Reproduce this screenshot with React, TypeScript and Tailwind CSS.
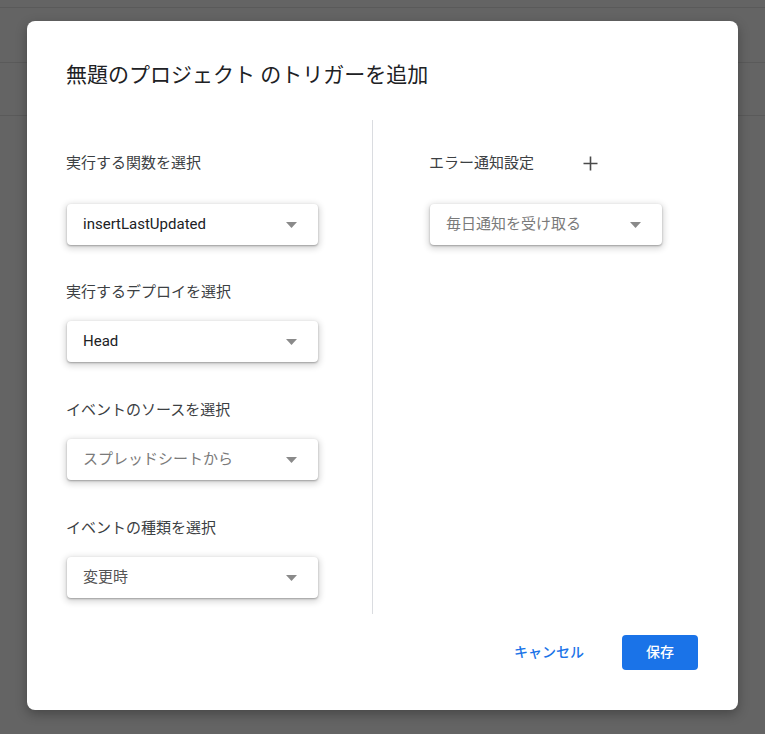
import React from "react";

const font = { fontFamily: 'Roboto, "Noto Sans CJK JP", "Noto Sans", sans-serif' };

function Caret() {
  return (
    <svg width="11" height="6" viewBox="0 0 11 6" className="shrink-0">
      <path d="M0 0 L11 0 L5.5 6 Z" fill="#8a8a8a" />
    </svg>
  );
}

function Select({ value, tone, w }: { value: string; tone: string; w: string }) {
  return (
    <div
      className={`${w} h-[41px] bg-white rounded-[4px] flex items-center justify-between pl-4 pr-[21px] shadow-[0_1px_2px_rgba(0,0,0,0.3),0_2px_6px_2px_rgba(0,0,0,0.15)]`}
    >
      <span className={`text-[15px] ${tone}`}>{value}</span>
      <Caret />
    </div>
  );
}

export default function App() {
  return (
    <div className="relative w-[765px] h-[734px] bg-[#646464] overflow-hidden" style={font}>
      <div className="h-[8px] border-b border-[#5a5a5a]" />
      <div className="h-[55px] border-b border-[#5a5a5a]" />
      <div className="h-[53px] border-b border-[#5a5a5a]" />

      <div className="absolute left-[27px] top-[21px] w-[711px] h-[689px] bg-white rounded-[8px] shadow-[0_4px_12px_rgba(0,0,0,0.3)] flex flex-col pt-[40px] pb-[40px]">
        <h1 className="pl-[39px] text-[21px] leading-[28px] text-[#202124] font-normal">
          無題のプロジェクト のトリガーを追加
        </h1>
        <div className="mt-[31px] flex flex-1">
          <div className="w-[346px] pl-[40px] pt-[32px] pb-[16px] border-r border-[#dadce0] flex flex-col">
            <div className="-ml-[1px] text-[15px] leading-[22px] text-[#3c4043]">実行する関数を選択</div>
            <div className="mt-[30px]">
              <Select value="insertLastUpdated" tone="text-[#202124]" w="w-[251px]" />
            </div>
            <div className="-ml-[1px] mt-[36px] text-[15px] leading-[22px] text-[#3c4043]">実行するデプロイを選択</div>
            <div className="mt-[18px]">
              <Select value="Head" tone="text-[#202124]" w="w-[251px]" />
            </div>
            <div className="-ml-[1px] mt-[37px] text-[15px] leading-[22px] text-[#3c4043]">イベントのソースを選択</div>
            <div className="mt-[18px]">
              <Select value="スプレッドシートから" tone="text-[#7a7a7a]" w="w-[251px]" />
            </div>
            <div className="-ml-[1px] mt-[37px] text-[15px] leading-[22px] text-[#3c4043]">イベントの種類を選択</div>
            <div className="mt-[18px]">
              <Select value="変更時" tone="text-[#555555]" w="w-[251px]" />
            </div>
          </div>
          <div className="flex-1 pl-[56px] pt-[32px] flex flex-col">
            <div className="flex items-center h-[22px]">
              <span className="text-[15px] leading-[22px] text-[#3c4043]">エラー通知設定</span>
              <svg width="15" height="15" viewBox="0 0 15 15" className="ml-[49px]">
                <path d="M7.5 0.5 V14.5 M0.5 7.5 H14.5" stroke="#4a4a4a" strokeWidth="1.6" />
              </svg>
            </div>
            <div className="mt-[30px] pl-[1px]">
              <Select value="毎日通知を受け取る" tone="text-[#7a7a7a]" w="w-[232px]" />
            </div>
          </div>
        </div>
        <div className="mt-[21px] flex items-center justify-end pr-[40px] gap-[38px]">
          <span className="text-[14px] font-medium text-[#1a73e8]">キャンセル</span>
          <button className="w-[76px] h-[35px] rounded-[4px] bg-[#1a73e8] text-white text-[14px] font-medium">
            保存
          </button>
        </div>
      </div>
    </div>
  );
}
